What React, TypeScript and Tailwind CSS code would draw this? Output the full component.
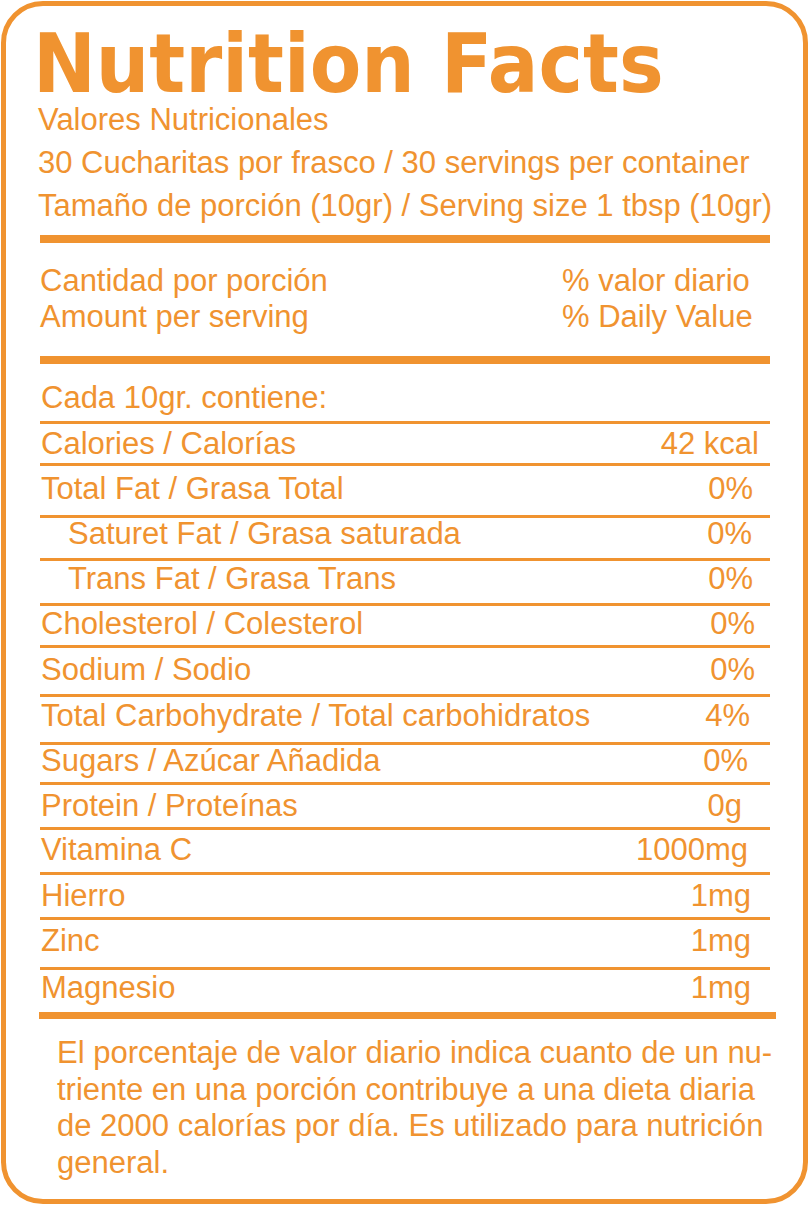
import React from "react";

type Row = {
  label: string;
  value: string;
  cls: string;
  vcls: string;
  indent?: boolean;
};

const rows: Row[] = [
  { label: "Calories / Calorías", value: "42 kcal", cls: "h-[39px] pt-[4px]", vcls: "pr-[11px]" },
  { label: "Total Fat / Grasa Total", value: "0%", cls: "h-[49px] pt-[7px]", vcls: "pr-[17px]" },
  { label: "Saturet Fat / Grasa saturada", value: "0%", cls: "h-[40px] pt-[0px]", vcls: "pr-[18px]", indent: true },
  { label: "Trans Fat / Grasa Trans", value: "0%", cls: "h-[42px] pt-[2px]", vcls: "pr-[17px]", indent: true },
  { label: "Cholesterol / Colesterol", value: "0%", cls: "h-[39px] pt-[2px]", vcls: "pr-[15px]" },
  { label: "Sodium / Sodio", value: "0%", cls: "h-[46px] pt-[6px]", vcls: "pr-[15px]" },
  { label: "Total Carbohydrate / Total carbohidratos", value: "4%", cls: "h-[45px] pt-[3px]", vcls: "pr-[20px]" },
  { label: "Sugars / Azúcar Añadida", value: "0%", cls: "h-[37px] pt-[0px]", vcls: "pr-[22px]" },
  { label: "Protein / Proteínas", value: "0g", cls: "h-[42px] pt-[5px]", vcls: "pr-[28px]" },
  { label: "Vitamina C", value: "1000mg", cls: "h-[42px] pt-[4px]", vcls: "pr-[22px]" },
  { label: "Hierro", value: "1mg", cls: "h-[42px] pt-[5px]", vcls: "pr-[19px]" },
  { label: "Zinc", value: "1mg", cls: "h-[47px] pt-[5px]", vcls: "pr-[19px]" },
  { label: "Magnesio", value: "1mg", cls: "h-[42px] pt-[2px]", vcls: "pr-[19px]" },
];

export default function App() {
  return (
    <div className="w-[810px] h-[1205px] bg-white overflow-hidden">
      <div
        className="ml-[1px] mt-[1px] w-[807px] h-[1203px] border-[5px] border-[#F09330] rounded-[42px] pl-[34px] pr-[33px] pt-[24px] text-[#F09330]"
        style={{ fontFamily: '"Liberation Sans", Arial, sans-serif' }}
      >
        {/* Title */}
        <div className="h-[68px] ml-[-7px] whitespace-nowrap">
          <span
            className="inline-block text-[82px] leading-[68px] font-bold origin-left [transform:scaleX(0.916)]"
            style={{ fontFamily: '"DejaVu Sans", Verdana, sans-serif' }}
          >
            Nutrition Facts
          </span>
        </div>

        {/* Header lines */}
        <div className="ml-[-2px] text-[31px] leading-[43px] whitespace-nowrap">
          <div>Valores Nutricionales</div>
          <div>30 Cucharitas por frasco / 30 servings per container</div>
          <div>Tamaño de porción (10gr) / Serving size 1 tbsp (10gr)</div>
        </div>

        <div className="mt-[8px] h-[8px] w-[730px] bg-[#F09330]" />

        {/* Amount per serving */}
        <div className="mt-[20px] grid grid-cols-[522px_1fr] text-[31px] leading-[36px] whitespace-nowrap">
          <div>
            <div>Cantidad por porción</div>
            <div>Amount per serving</div>
          </div>
          <div>
            <div>% valor diario</div>
            <div>% Daily Value</div>
          </div>
        </div>

        <div className="mt-[21px] h-[8px] w-[730px] bg-[#F09330]" />

        {/* Rows */}
        <div className="w-[730px] text-[31px] leading-[32px] whitespace-nowrap">
          <div className="h-[57px] pt-[18px] pl-[1px]">Cada 10gr. contiene:</div>
          <div className="h-[3px] bg-[#F09330]" />
          {rows.map((r, i) => (
            <React.Fragment key={i}>
              <div className={`flex justify-between ${r.cls}`}>
                <span className={r.indent ? "pl-[28px]" : "pl-[1px]"}>{r.label}</span>
                <span className={r.vcls}>{r.value}</span>
              </div>
              {i < rows.length - 1 && <div className="h-[3px] bg-[#F09330]" />}
            </React.Fragment>
          ))}
        </div>

        <div className="ml-[-1px] h-[7px] w-[737px] bg-[#F09330]" />

        {/* Footer */}
        <div className="pt-[16px] pl-[17px] text-[31px] leading-[36.5px] whitespace-nowrap">
          El porcentaje de valor diario indica cuanto de un nu-
          <br />
          triente en una porción contribuye a una dieta diaria
          <br />
          de 2000 calorías por día. Es utilizado para nutrición
          <br />
          general.
        </div>
      </div>
    </div>
  );
}
